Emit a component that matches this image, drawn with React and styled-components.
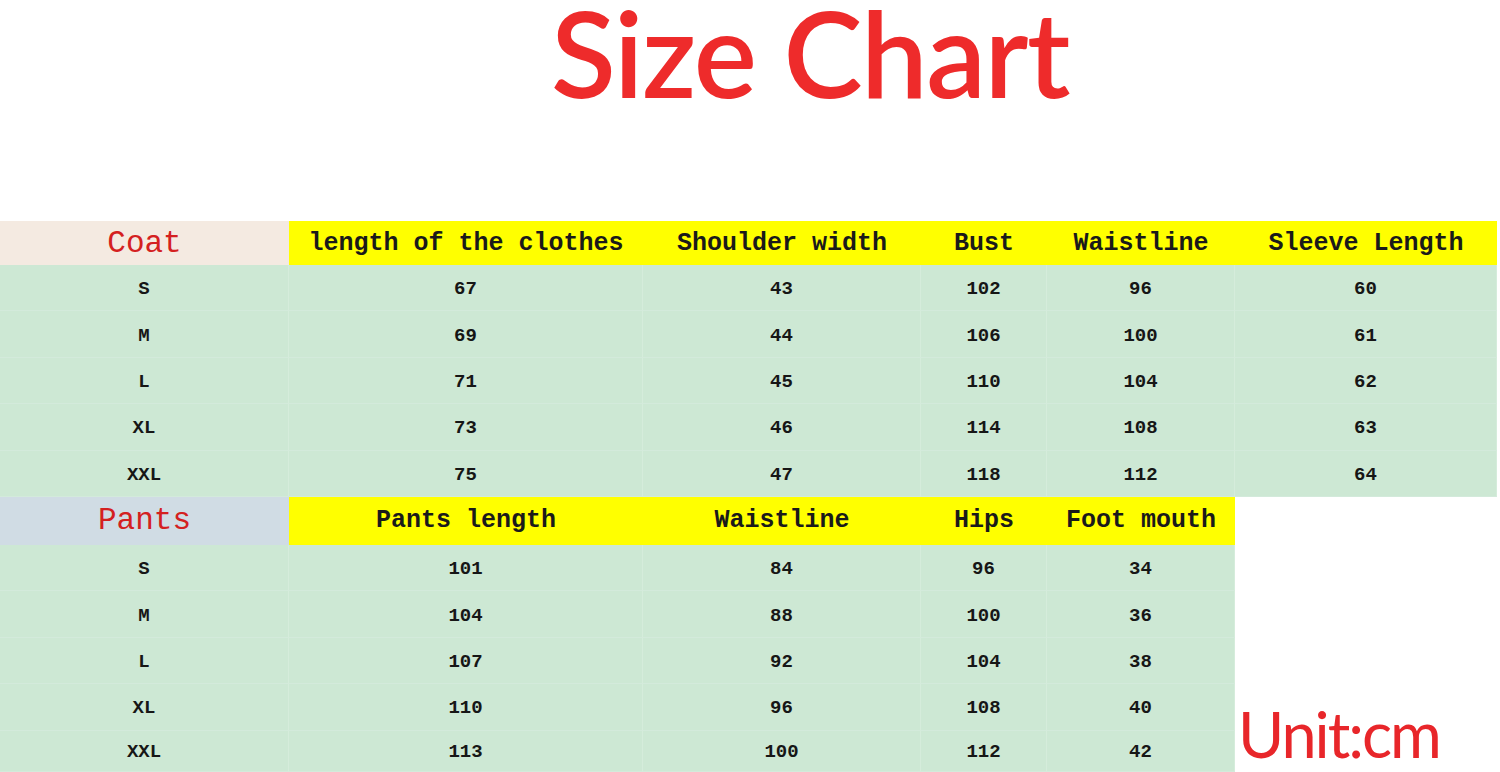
import React from "react";
import styled, { createGlobalStyle } from "styled-components";

const Global = createGlobalStyle`
  html, body { margin: 0; padding: 0; background: #ffffff; }
  body { width: 1500px; height: 772px; overflow: hidden; }
`;

const COLS = "289px 354px 278px 126px 188px";

const Page = styled.div`
  width: 1500px;
  height: 772px;
  display: flex;
  flex-direction: column;
  background: #fff;
  overflow: hidden;
  & > * { flex-shrink: 0; }
`;

const TitleBar = styled.header`
  height: 221px;
  padding-left: 551px;
  box-sizing: border-box;
`;

const Title = styled.h1`
  margin: 0;
  font-family: Lato, "Open Sans", sans-serif;
  font-weight: 600;
  font-size: 119px;
  line-height: 105px;
  color: #ee2b2b;
  letter-spacing: -1.5px;
`;

const Grid = styled.div`
  display: grid;
  grid-template-columns: ${(p) => p.$cols};
  grid-template-rows: ${(p) => p.$rows};
  width: ${(p) => p.$width}px;
`;

const Cell = styled.div`
  display: flex;
  align-items: center;
  justify-content: center;
  padding-top: 3px;
  background: #cde8d4;
  border-right: 1px solid #d5ecdb;
  border-bottom: 1px solid #d3eadb;
  box-sizing: border-box;
  font-family: "Liberation Mono", "DejaVu Sans Mono", monospace;
  font-weight: 700;
  font-size: 19px;
  color: #161616;
`;

const HeadCell = styled.div`
  display: flex;
  align-items: center;
  justify-content: center;
  background: #ffff00;
  font-family: "Liberation Mono", "DejaVu Sans Mono", monospace;
  font-weight: 700;
  font-size: 25px;
  color: #1a1a1a;
  white-space: nowrap;
`;

const SectionCell = styled(HeadCell)`
  background: ${(p) => p.$bg};
  color: #d42020;
  font-weight: 400;
  font-size: 31px;
`;

const PantsWrap = styled.div`
  display: flex;
  height: 275px;
`;

const UnitBox = styled.div`
  flex: 1;
  display: flex;
  align-items: flex-end;
  padding-left: 3px;
`;

const Unit = styled.span`
  font-family: Lato, "Open Sans", sans-serif;
  font-size: 63px;
  line-height: 1.2;
  color: #e8262a;
  letter-spacing: -2px;
`;

const coatHead = ["length of the clothes", "Shoulder width", "Bust", "Waistline", "Sleeve Length"];
const coatRows = [
  ["S", 67, 43, 102, 96, 60],
  ["M", 69, 44, 106, 100, 61],
  ["L", 71, 45, 110, 104, 62],
  ["XL", 73, 46, 114, 108, 63],
  ["XXL", 75, 47, 118, 112, 64],
];
const pantsHead = ["Pants length", "Waistline", "Hips", "Foot mouth"];
const pantsRows = [
  ["S", 101, 84, 96, 34],
  ["M", 104, 88, 100, 36],
  ["L", 107, 92, 104, 38],
  ["XL", 110, 96, 108, 40],
  ["XXL", 113, 100, 112, 42],
];

export default function App() {
  return (
    <Page>
      <Global />
      <TitleBar>
        <Title>Size Chart</Title>
      </TitleBar>
      <Grid $cols={COLS + " 262px"} $rows="44px repeat(5, 46.4px)" $width={1497}>
        <SectionCell $bg="#f4eae1">Coat</SectionCell>
        {coatHead.map((h) => (
          <HeadCell key={h}>{h}</HeadCell>
        ))}
        {coatRows.flat().map((v, i) => (
          <Cell key={i}>{v}</Cell>
        ))}
      </Grid>
      <PantsWrap>
        <Grid $cols={COLS} $rows="48px repeat(4, 46.4px) 41.4px" $width={1235}>
          <SectionCell $bg="#d0dce4">Pants</SectionCell>
          {pantsHead.map((h) => (
            <HeadCell key={h}>{h}</HeadCell>
          ))}
          {pantsRows.flat().map((v, i) => (
            <Cell key={i}>{v}</Cell>
          ))}
        </Grid>
        <UnitBox>
          <Unit>Unit:cm</Unit>
        </UnitBox>
      </PantsWrap>
    </Page>
  );
}
